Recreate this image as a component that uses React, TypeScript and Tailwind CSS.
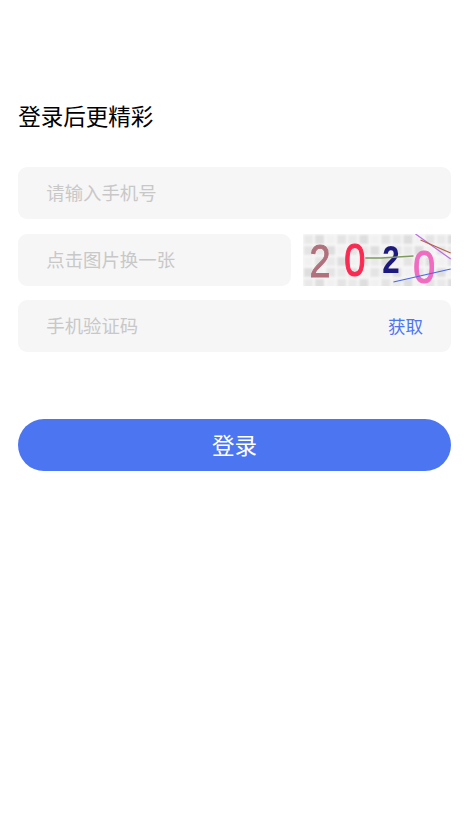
const font = "font-['Noto_Sans_CJK_SC','Noto_Sans',sans-serif]";

// blurry captcha picture: grey checks, four digits, noise lines
function Captcha() {
  const cells = [];
  const fills = ["#e9e9e9", "#dedede", "#f1f1f1", "#e4e4e4"];
  for (let row = 0; row < 5; row++) {
    for (let col = 0; col < 14; col++) {
      const shade = (row * 7 + col * 5) % 4;
      cells.push(
        <rect key={`${row}-${col}`} x={col * 11 + 1} y={row * 11 + 1} width="9" height="9" fill={fills[shade]} />
      );
    }
  }
  return (
    <svg viewBox="0 0 147 52" preserveAspectRatio="none" className="w-[147.7px] h-[52px] shrink-0">
      <rect width="147" height="52" fill="#f8f8f8" />
      <g style={{ filter: "blur(0.8px)" }}>{cells}</g>
      <g style={{ filter: "blur(0.6px)" }} fontFamily="Liberation Sans, sans-serif" textAnchor="middle">
        <text x="0" y="0" fontSize="47" fill="#b0707c" stroke="#b0707c" strokeWidth="1" transform="translate(17 43) scale(0.8 1)">2</text>
        <text x="0" y="0" fontSize="46" fill="#fa2a52" stroke="#fa2a52" strokeWidth="1.2" transform="translate(51.5 42) scale(0.82 1)">0</text>
        <text x="0" y="0" fontSize="39" fontWeight="700" fill="#1d1a7e" transform="translate(87.5 39) scale(0.8 1)">2</text>
        <text x="0" y="0" fontSize="46" fill="#f06cc0" stroke="#f06cc0" strokeWidth="1.2" transform="translate(120.5 48.5) scale(0.85 1)">0</text>
        <path d="M62 24 L78 24 L110 22" stroke="#7f9a5f" strokeWidth="1.3" fill="none" />
        <path d="M90 48 L147 35" stroke="#4a66e8" strokeWidth="1.2" fill="none" />
        <path d="M112 0 L147 25" stroke="#b96be0" strokeWidth="1.2" fill="none" />
        <path d="M117 6 L147 19" stroke="#b5603f" strokeWidth="1.2" fill="none" />
      </g>
    </svg>
  );
}

export default function App() {
  return (
    <div className={`min-h-[834px] bg-white pl-[18.3px] pr-[17.3px] pt-[98px] ${font}`}>
      <h1 className="text-[22.5px] leading-[34px] font-normal text-black">登录后更精彩</h1>

      <div className="mt-[35px] flex flex-col gap-[14.5px]">
        <div className="h-[52px] rounded-[9px] bg-[#f6f6f6] pl-[28px] flex items-center">
          <span className="text-[18.4px] text-[#c8c8c8]">请输入手机号</span>
        </div>

        <div className="flex items-center gap-[12px]">
          <div className="h-[52px] flex-1 rounded-[9px] bg-[#f6f6f6] pl-[28px] flex items-center">
            <span className="text-[18.4px] text-[#c8c8c8]">点击图片换一张</span>
          </div>
          <Captcha />
        </div>

        <div className="h-[52px] rounded-[9px] bg-[#f6f6f6] pl-[28px] pr-[27.7px] flex items-center justify-between">
          <span className="text-[18.4px] text-[#c8c8c8]">手机验证码</span>
          <span className="text-[17.5px] text-[#4c75f2]">获取</span>
        </div>
      </div>

      <button className="mt-[67px] w-full h-[52px] rounded-full bg-[#4c75f2] text-white text-[22.5px]">
        登录
      </button>
    </div>
  );
}
